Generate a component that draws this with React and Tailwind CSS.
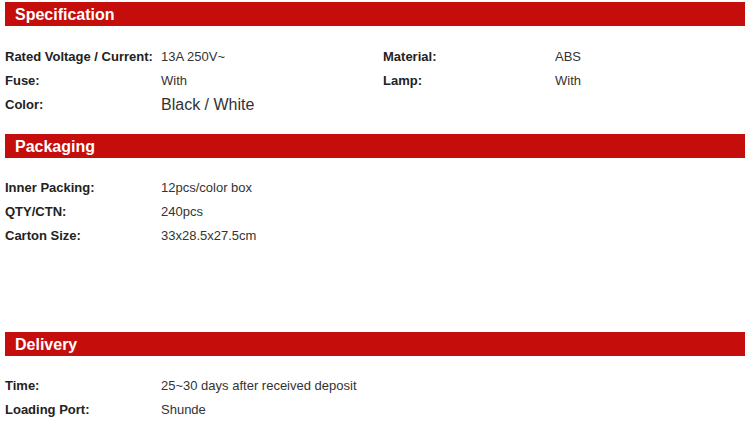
const font = { fontFamily: '"Liberation Sans", Arial, sans-serif' };

function Header({ title }) {
  return (
    <div className="h-[24px] bg-[#c50d0b] pl-[10px] text-[16px] font-bold leading-[25px] text-white">
      {title}
    </div>
  );
}

function Row({ items, big }) {
  return (
    <div className="grid h-[24px] grid-cols-[156px_222px_172px_1fr] items-center text-[13px] leading-[24px]">
      {items.map((t, i) =>
        i % 2 === 0 ? (
          <div key={i} className="font-bold text-[#222]">{t}</div>
        ) : (
          <div key={i} className={`text-[#333] ${big && i === 1 ? "text-[16px]" : ""}`}>{t}</div>
        )
      )}
    </div>
  );
}

export default function App() {
  return (
    <div className="min-h-[431px] w-[748px] bg-white pl-[5px] pr-[3px] pt-[2px]" style={font}>
      <Header title="Specification" />
      <div className="pt-[19px]">
        <Row items={["Rated Voltage / Current:", "13A 250V~", "Material:", "ABS"]} />
        <Row items={["Fuse:", "With", "Lamp:", "With"]} />
        <Row items={["Color:", "Black / White"]} big />
      </div>
      <div className="mt-[17px]">
        <Header title="Packaging" />
      </div>
      <div className="pt-[18px]">
        <Row items={["Inner Packing:", "12pcs/color box"]} />
        <Row items={["QTY/CTN:", "240pcs"]} />
        <Row items={["Carton Size:", "33x28.5x27.5cm"]} />
      </div>
      <div className="mt-[84px]">
        <Header title="Delivery" />
      </div>
      <div className="pt-[18px]">
        <Row items={["Time:", "25~30 days after received deposit"]} />
        <Row items={["Loading Port:", "Shunde"]} />
      </div>
    </div>
  );
}
